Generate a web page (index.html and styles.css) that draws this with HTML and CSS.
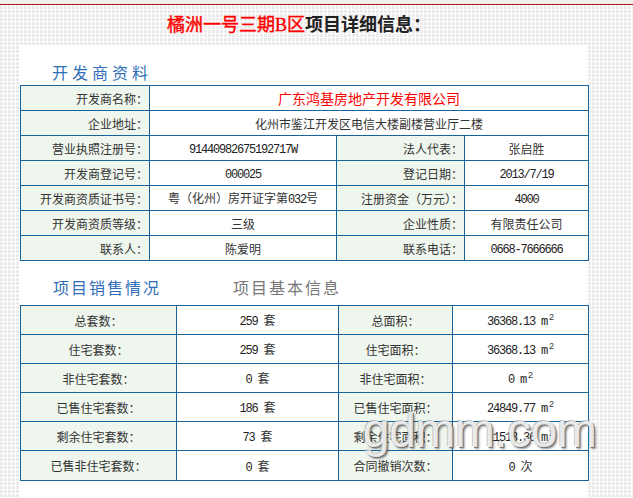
FILE: index.html
```html
<!DOCTYPE html>
<html lang="zh-CN">
<head>
<meta charset="utf-8">
<title>橘洲一号三期B区项目详细信息</title>
<link rel="stylesheet" href="styles.css">
</head>
<body>
<div class="topstrip"></div>
<div class="redline"></div>
<div class="page">
  <h1 class="title"><span class="title-red">橘洲一号三期<span class="latin">B</span>区</span>项目详细信息：</h1>
  <div class="panel">
    <div class="tabs tabs-dev"><span class="tab tab-active tab-wide">开发商资料</span></div>
    <table class="info info-dev">
      <colgroup><col class="d1"><col class="d2"><col class="d3"><col class="d4"></colgroup>
      <tr><th>开发商名称：</th><td colspan="3" class="company">广东鸿基房地产开发有限公司</td></tr>
      <tr><th>企业地址：</th><td colspan="3">化州市鉴江开发区电信大楼副楼营业厅二楼</td></tr>
      <tr><th>营业执照注册号：</th><td><span class="num">91440982675192717W</span></td><th>法人代表：</th><td>张启胜</td></tr>
      <tr><th>开发商登记号：</th><td><span class="num">000025</span></td><th>登记日期：</th><td><span class="num">2013/7/19</span></td></tr>
      <tr><th>开发商资质证书号：</th><td>粤（化州）房开证字第<span class="num">032</span>号</td><th>注册资金（万元）：</th><td><span class="num">4000</span></td></tr>
      <tr><th>开发商资质等级：</th><td>三级</td><th>企业性质：</th><td>有限责任公司</td></tr>
      <tr><th>联系人：</th><td>陈爱明</td><th>联系电话：</th><td><span class="num">0668-7666666</span></td></tr>
    </table>
    <div class="tabs tabs-sales"><span class="tab tab-active">项目销售情况</span><span class="tab tab-idle">项目基本信息</span></div>
    <table class="info info-sales">
      <colgroup><col class="s1"><col class="s2"><col class="s3"><col class="s4"></colgroup>
      <tr><th>总套数：</th><td><span class="num">259 </span>套</td><th>总面积：</th><td><span class="num">36368.13 m</span><sup>2</sup></td></tr>
      <tr><th>住宅套数：</th><td><span class="num">259 </span>套</td><th>住宅面积：</th><td><span class="num">36368.13 m</span><sup>2</sup></td></tr>
      <tr><th>非住宅套数：</th><td><span class="num">0 </span>套</td><th>非住宅面积：</th><td><span class="num">0 m</span><sup>2</sup></td></tr>
      <tr><th>已售住宅套数：</th><td><span class="num">186 </span>套</td><th>已售住宅面积：</th><td><span class="num">24849.77 m</span><sup>2</sup></td></tr>
      <tr><th>剩余住宅套数：</th><td><span class="num">73 </span>套</td><th>剩余住宅面积：</th><td><span class="num">11518.36 m</span><sup>2</sup></td></tr>
      <tr><th>已售非住宅套数：</th><td><span class="num">0 </span>套</td><th>合同撤销次数：</th><td><span class="num">0 </span>次</td></tr>
    </table>
  </div>
  <div class="watermark">gdmm.com</div>
</div>
</body>
</html>
```

FILE: styles.css
```css
html, body {
  margin: 0;
  padding: 0;
}
body {
  width: 633px;
  height: 498px;
  overflow: hidden;
  background: #fff;
  font-family: "Noto Sans CJK SC", sans-serif;
  font-size: 12px;
  color: #333;
}
.topstrip {
  height: 4px;
  background: #f0f0f0;
}
.redline {
  height: 1px;
  background: #b01212;
}
.page {
  position: relative;
  height: 493px;
  background-color: #ebebeb;
  background-image:
    linear-gradient(to right, #fff 1px, transparent 1px),
    linear-gradient(to bottom, #fff 1px, transparent 1px);
  background-size: 4px 4px;
  background-position: 3px 0;
}
.title {
  margin: 0;
  height: 40px;
  box-sizing: border-box;
  padding: 6px 0 0 167px;
  line-height: 24px;
  font-size: 18px;
  font-weight: bold;
  color: #222;
  white-space: nowrap;
}
.title-red {
  color: #f00;
  font-weight: normal;
  -webkit-text-stroke: 0.4px #f00;
}
.latin {
  font-family: "Liberation Serif", serif;
}
.panel {
  margin-left: 20px;
  width: 568px;
  height: 453px;
  background: #fff;
}
.tabs {
  display: flex;
  line-height: 20px;
  font-size: 16px;
  white-space: nowrap;
}
.tabs-dev {
  padding: 17px 0 3px 32px;
}
.tabs-sales {
  padding: 16px 0 8px 33px;
}
.tab {
  letter-spacing: 2px;
  color: #2f6fb7;
}
.tab-wide {
  letter-spacing: 4px;
}
.tab-idle {
  margin-left: 72px;
  color: #777;
}
.info {
  width: 568px;
  border-collapse: collapse;
  table-layout: fixed;
}
.info th,
.info td {
  border: 1px solid #17649c;
  padding: 0;
  font-size: 12px;
  font-weight: normal;
  color: #333;
  white-space: nowrap;
  overflow: hidden;
}
.info th {
  background: #eff6ee;
}
.info td {
  text-align: center;
}
.info-dev th,
.info-dev td {
  height: 24px;
}
.info-dev th {
  text-align: right;
  padding-right: 1px;
}
.info-sales th,
.info-sales td {
  height: 28px;
}
.info-sales tr:last-child th,
.info-sales tr:last-child td {
  height: 29px;
}
.info-sales th {
  text-align: center;
}
.d1 { width: 129px; }
.d2 { width: 187px; }
.d3 { width: 128px; }
.d4 { width: 124px; }
.s1 { width: 156px; }
.s2 { width: 162px; }
.s3 { width: 114px; }
.s4 { width: 136px; }
.info td.company {
  color: #f00;
  font-size: 14px;
}
.num {
  font-family: "Liberation Mono", monospace;
  font-size: 12px;
  letter-spacing: -1.2px;
  white-space: pre;
  color: #222;
}
sup {
  font-family: "Liberation Sans", sans-serif;
  font-size: 9px;
  line-height: 0;
  vertical-align: 5px;
  margin-left: 2px;
}
.watermark {
  position: absolute;
  left: 363px;
  top: 402px;
  font-family: "Liberation Sans", sans-serif;
  font-size: 48px;
  line-height: 48px;
  letter-spacing: -0.5px;
  color: rgba(255, 255, 255, 0.8);
  text-shadow:
    -1px -1px 0 rgba(170, 170, 170, 0.7),
    1px 1px 0 rgba(110, 110, 110, 0.85),
    2px 2px 2px rgba(0, 0, 0, 0.4);
  pointer-events: none;
  white-space: nowrap;
}
```
